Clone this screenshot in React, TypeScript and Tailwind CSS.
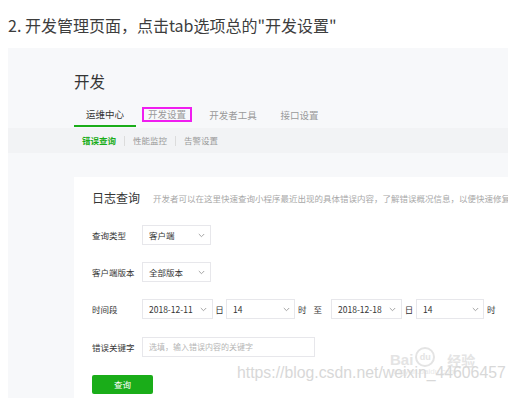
import React from "react";

const Chevron = () => (
  <svg width="7" height="5" viewBox="0 0 7 5" fill="none" className="shrink-0">
    <path d="M0.8 1 L3.5 3.7 L6.2 1" stroke="#9a9a9a" strokeWidth="0.9" />
  </svg>
);

function Select({ w, text, chevronPad = 8 }: { w: string; text: string; chevronPad?: number }) {
  return (
    <div
      className={`${w} h-[20px] flex items-center justify-between bg-white border border-[#e7e7eb] pl-[6px] text-[8.5px] text-[#353535]`}
      style={{ paddingRight: chevronPad }}
    >
      <span>{text}</span>
      <Chevron />
    </div>
  );
}

export default function App() {
  return (
    <div
      className="w-[516px] h-[398px] bg-white overflow-hidden relative"
      style={{ fontFamily: '"Noto Sans CJK SC", "Noto Sans", sans-serif' }}
    >
      <div className="pt-[13px] px-2 text-[16px] leading-6 text-[#3d3d3d]">
        2. 开发管理页面，点击tab选项总的"开发设置"
      </div>
      <div className="mt-[11px] mx-2 w-[500px] h-[350px] overflow-hidden flex flex-col bg-[#f7f8fa]">
        {/* header */}
        <div className="h-[80px] bg-[#f7f8fa] pl-[66px] flex flex-col">
          <div className="mt-[25px] text-[15.5px] leading-[16px] text-[#353535]">开发</div>
          <div className="mt-[14px] flex h-[24px] text-[9.5px] leading-[11px]">
            <div className="w-[62px] flex items-center justify-center border-b-2 border-[#1aad19] text-[#353535]">
              运维中心
            </div>
            <div className="w-[62px] flex items-center justify-center text-[#9a9a9a]">
              <span className="border-2 border-[#f01ef0] px-[4px] -mt-[1px]">开发设置</span>
            </div>
            <div className="w-[70px] flex items-center justify-center text-[#9a9a9a]">开发者工具</div>
            <div className="w-[63px] flex items-center justify-center text-[#9a9a9a]">接口设置</div>
          </div>
        </div>
        {/* sub nav */}
        <div className="h-[25px] bg-[#f2f3f5] pl-[74px] flex items-center text-[8.5px] leading-none">
          <span className="text-[#1aad19] font-bold">错误查询</span>
          <span className="mx-[8px] w-px h-[10px] bg-[#dcdcdc]" />
          <span className="text-[#9a9a9a]">性能监控</span>
          <span className="mx-[8px] w-px h-[10px] bg-[#dcdcdc]" />
          <span className="text-[#9a9a9a]">告警设置</span>
        </div>
        {/* body */}
        <div className="flex-1 pl-[66px] pt-[24px] flex">
          <div className="flex-1 bg-white pl-[18px] pt-[14px] relative">
            <div className="flex items-center whitespace-nowrap">
              <span className="text-[12px] leading-[14px] text-[#353535]">日志查询</span>
              <span className="ml-[13px] text-[8.5px] text-[#a8a8a8]">
                开发者可以在这里快速查询小程序最近出现的具体错误内容，了解错误概况信息，以便快速修复问题
              </span>
            </div>
            <div className="mt-[20px] flex items-center h-[20px]">
              <span className="w-[50px] text-[8.5px] text-[#353535]">查询类型</span>
              <Select w="w-[69px]" text="客户端" chevronPad={5} />
            </div>
            <div className="mt-[17px] flex items-center h-[20px]">
              <span className="w-[50px] text-[8.5px] text-[#353535]">客户端版本</span>
              <Select w="w-[69px]" text="全部版本" chevronPad={5} />
            </div>
            <div className="mt-[17px] flex items-center h-[20px] text-[8.5px] text-[#353535]">
              <span className="w-[50px]">时间段</span>
              <Select w="w-[71px]" text="2018-12-11" chevronPad={5} />
              <span className="w-[13px] text-center">日</span>
              <Select w="w-[69px]" text="14" chevronPad={4} />
              <span className="ml-[3px]">时</span>
              <span className="ml-[7px]">至</span>
              <span className="w-[9px]" />
              <Select w="w-[71px]" text="2018-12-18" chevronPad={5} />
              <span className="w-[14px] text-center">日</span>
              <Select w="w-[68px]" text="14" chevronPad={4} />
              <span className="ml-[3px]">时</span>
            </div>
            <div className="mt-[18px] flex items-center h-[20px]">
              <span className="w-[50px] text-[8.5px] text-[#353535]">错误关键字</span>
              <div className="w-[173px] h-[20px] border border-[#e7e7eb] flex items-center pl-[6px] text-[8px] text-[#b5b5b5]">
                选填，输入错误内容的关键字
              </div>
            </div>
            <div className="mt-[18px] w-[61px] h-[19px] rounded-[2px] bg-[#1aad19] flex items-center justify-center text-[8.5px] text-white">
              查询
            </div>
            {/* Baidu jingyan watermark */}
            <div className="absolute left-[316px] top-[170px] flex items-end gap-[2px] text-[#e4e4e4] pointer-events-none">
              <span className="text-[15px] font-bold leading-none" style={{ fontFamily: '"Liberation Sans", sans-serif' }}>Bai</span>
              <span className="w-[20px] h-[20px] rounded-full border-2 border-[#e4e4e4] flex items-center justify-center text-[9px] font-bold leading-none" style={{ fontFamily: '"Liberation Sans", sans-serif' }}>du</span>
              <span className="ml-[10px] text-[14px] leading-none font-bold">经验</span>
            </div>
            <div className="absolute left-[318px] top-[191px] text-[8px] text-[#e8e8e8] leading-none pointer-events-none" style={{ fontFamily: '"Liberation Sans", sans-serif' }}>
              jingyan.baidu.com
            </div>
            <div className="absolute left-[163px] top-[188px] text-[15.8px] leading-none text-[#d8d8d8] whitespace-nowrap pointer-events-none" style={{ fontFamily: '"Liberation Sans", sans-serif' }}>
              https://blog.csdn.net/weixin_44606457
            </div>
          </div>
        </div>
      </div>
    </div>
  );
}
